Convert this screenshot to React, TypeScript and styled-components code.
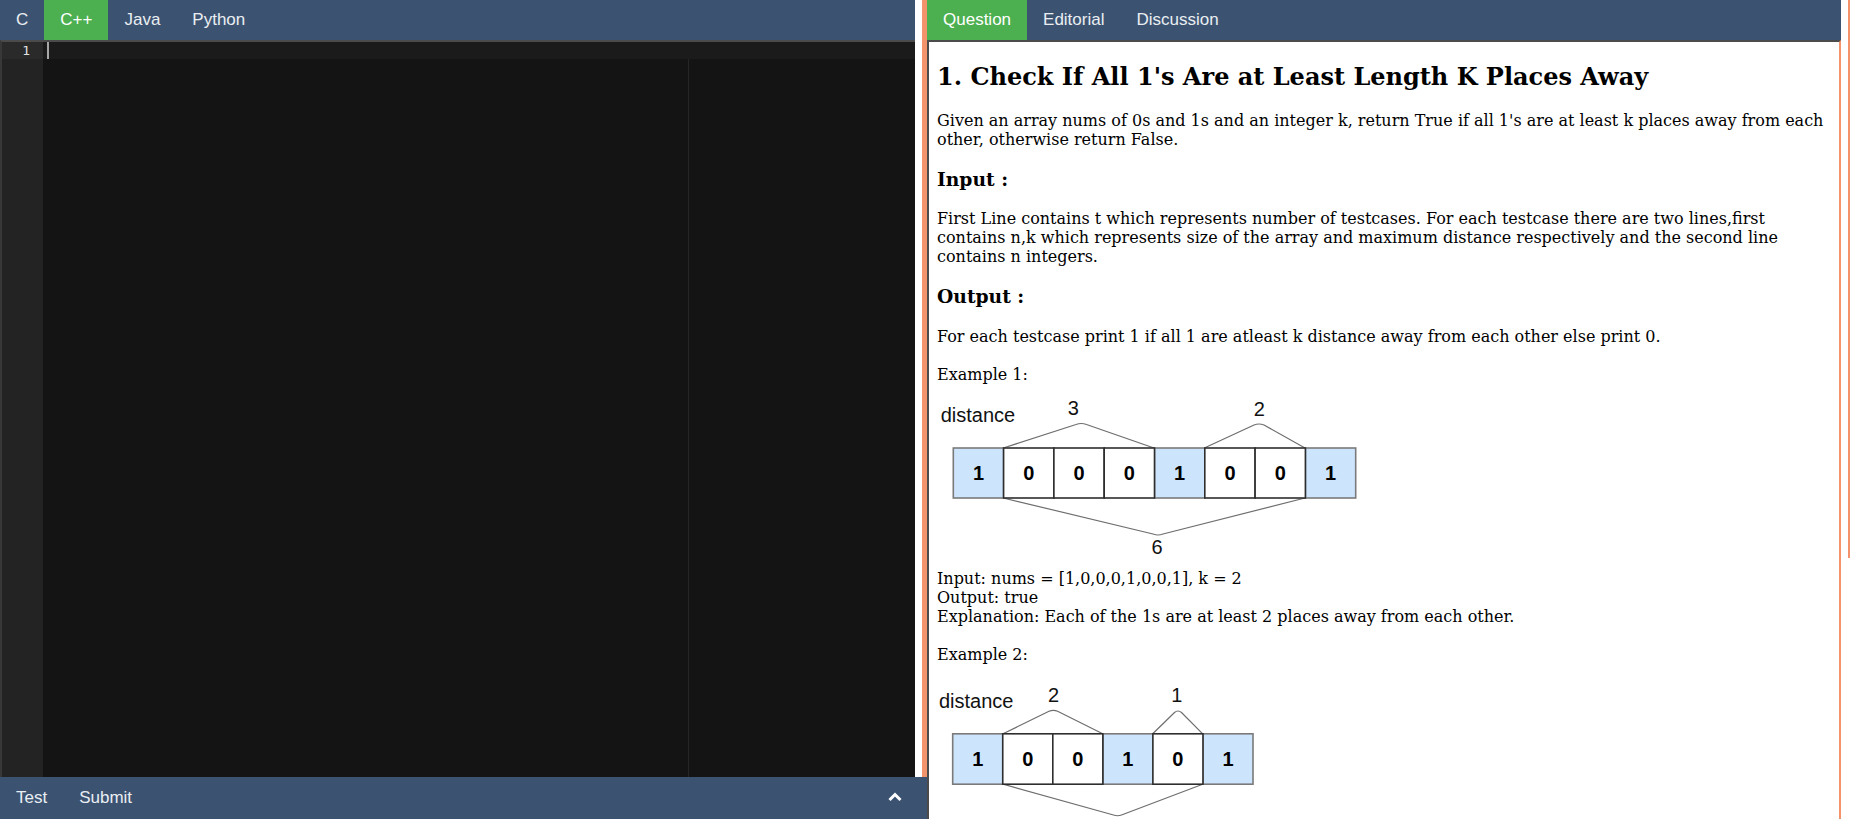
import React from "react";
import styled, { createGlobalStyle } from "styled-components";

const BLUE = "#3b5371";
const GREEN = "#4caf50";
const ORANGE = "#f3936b";

const GlobalStyle = createGlobalStyle`
  html, body {
    margin: 0;
    padding: 0;
    height: 100%;
    overflow: hidden;
    background: #ffffff;
  }
  #root { height: 100%; }
  * { box-sizing: border-box; }
`;

const Page = styled.div`
  display: flex;
  width: 100vw;
  height: 100vh;
  overflow: hidden;
`;

const LeftColumn = styled.div`
  width: 927px;
  flex: none;
  display: flex;
  flex-direction: column;
`;

const Workspace = styled.div`
  flex: 1;
  display: flex;
  min-height: 0;
`;

const EditorPane = styled.div`
  flex: 1;
  min-width: 0;
  display: flex;
  flex-direction: column;
`;

const TabBar = styled.div`
  height: 40px;
  flex: none;
  display: flex;
  background: ${BLUE};
`;

const Tab = styled.button<{ $active?: boolean }>`
  border: none;
  margin: 0;
  padding: 0 16px;
  height: 40px;
  line-height: 40px;
  font-family: "Liberation Sans", Arial, sans-serif;
  font-size: 17px;
  color: ${(p) => (p.$active ? "#ffffff" : "#eaeef2")};
  background: ${(p) => (p.$active ? GREEN : "transparent")};
  cursor: pointer;
`;

const Editor = styled.div`
  flex: 1;
  display: flex;
  min-height: 0;
  background: #141414;
  border-top: 2px solid #4b4b4b;
  border-left: 2px solid #383838;
`;

const Gutter = styled.div`
  width: 41px;
  flex: none;
  background: #232323;
`;

const GutterCell = styled.div<{ $active?: boolean }>`
  height: 17px;
  line-height: 17px;
  padding-right: 13px;
  text-align: right;
  font-family: "DejaVu Sans Mono", monospace;
  font-size: 13px;
  color: #e2e2e2;
  background: ${(p) => (p.$active ? "#2a2a2a" : "transparent")};
`;

const CodeArea = styled.div`
  flex: 1;
  position: relative;
  min-width: 0;
`;

const CodeLine = styled.div<{ $active?: boolean }>`
  position: relative;
  height: 17px;
  background: ${(p) => (p.$active ? "#1b1b1b" : "transparent")};
`;

const Cursor = styled.span`
  position: absolute;
  left: 4px;
  top: 0;
  width: 2px;
  height: 17px;
  background: #a7a7a7;
`;

const PrintMargin = styled.div`
  position: absolute;
  top: 0;
  bottom: 0;
  left: 645px;
  width: 1px;
  background: #262626;
`;

const Splitter = styled.div`
  width: 12px;
  flex: none;
  background: #ffffff;
  border-right: 5px solid ${ORANGE};
`;

const BottomBar = styled.div`
  height: 42px;
  flex: none;
  display: flex;
  align-items: center;
  background: ${BLUE};
`;

const BarButton = styled.button`
  border: none;
  background: transparent;
  margin: 0;
  padding: 0 16px;
  height: 42px;
  font-family: "Liberation Sans", Arial, sans-serif;
  font-size: 17px;
  color: #eaeef2;
  cursor: pointer;
`;

const ToggleButton = styled.button`
  margin: 0 0 0 auto;
  border: none;
  background: transparent;
  padding: 0 25px 3px 0;
  height: 42px;
  display: flex;
  align-items: center;
  cursor: pointer;
`;

const RightColumn = styled.div`
  flex: 1;
  min-width: 0;
  display: flex;
  flex-direction: column;
`;

const Content = styled.div`
  flex: 1;
  min-height: 0;
  overflow: hidden;
  background: #ffffff;
  border-top: 2px solid #4b4b4b;
  border-left: 2px solid #4b4b4b;
  border-right: 2px solid ${ORANGE};
  padding: 0 8px;
  font-family: "DejaVu Serif", serif;
  color: #000;
`;

const Title = styled.h2`
  font-size: 24px;
  line-height: 28px;
  font-weight: bold;
  margin: 20.5px 0 20px;
`;

const SubTitle = styled.h3`
  font-size: 18.72px;
  line-height: 22px;
  font-weight: bold;
  margin: 19.3px 0;
`;

const Para = styled.p`
  font-size: 16px;
  line-height: 19px;
  margin: 19.3px 0;
`;

const Figure = styled.div`
  margin: -11px 0;
  line-height: 0;
`;

const Diagram = styled.svg`
  display: block;
  overflow: visible;
`;

const ScrollRail = styled.div`
  width: 9px;
  flex: none;
  background: #ffffff;
  display: flex;
  justify-content: flex-end;
  align-items: flex-start;
`;

const ScrollThumb = styled.div`
  width: 2px;
  height: 558px;
  background: ${ORANGE};
`;

const languages = ["C", "C++", "Java", "Python"];
const panels = ["Question", "Editorial", "Discussion"];

type Brace = { d: string };
type Label = { x: number; y: number; text: string };

interface DiagramSpec {
  width: number;
  height: number;
  cells: number[];
  cellX: number;
  cellY: number;
  cellW: number;
  cellH: number;
  distance: { x: number; y: number };
  braces: Brace[];
  labels: Label[];
}

const example1: DiagramSpec = {
  width: 430,
  height: 168,
  cells: [1, 0, 0, 0, 1, 0, 0, 1],
  cellX: 16.3,
  cellY: 56,
  cellW: 50.3,
  cellH: 50,
  distance: { x: 3.7, y: 30.2 },
  braces: [
    { d: "M 66.3 56 L 139 32.5 Q 144.3 30.5 149.5 32.5 L 217 56" },
    { d: "M 267.3 56 L 317 33 Q 322 31 327 33 L 368 56" },
    { d: "M 66.3 106 L 216 142 Q 221 144 226 142 L 368 106" },
  ],
  labels: [
    { x: 136.3, y: 23.2, text: "3" },
    { x: 322.3, y: 24.2, text: "2" },
    { x: 220, y: 161.9, text: "6" },
  ],
};

const example2: DiagramSpec = {
  width: 430,
  height: 160,
  cells: [1, 0, 0, 1, 0, 1],
  cellX: 15.7,
  cellY: 61.8,
  cellW: 50.05,
  cellH: 50.4,
  distance: { x: 2, y: 35.7 },
  braces: [
    { d: "M 66 61.8 L 112 39.3 Q 116.3 37.3 120.6 39.3 L 165.7 61.8" },
    { d: "M 215.7 61.8 L 237.5 40.5 Q 241 37.5 244.5 40.5 L 265.7 61.8" },
    { d: "M 66 112.2 L 176.5 143 Q 180.5 144.5 184.5 143 L 265.7 112.2" },
  ],
  labels: [
    { x: 116.5, y: 29.7, text: "2" },
    { x: 239.7, y: 29.7, text: "1" },
  ],
};

const ArrayDiagram: React.FC<{ spec: DiagramSpec }> = ({ spec }) => {
  const order = spec.cells
    .map((v, i) => ({ v, i }))
    .sort((a, b) => b.v - a.v);
  return (
    <Diagram width={spec.width} height={spec.height} viewBox={`0 0 ${spec.width} ${spec.height}`}>
      <text
        x={spec.distance.x}
        y={spec.distance.y}
        fontFamily="Liberation Sans, Arial, sans-serif"
        fontSize="20"
        fill="#111"
      >
        distance
      </text>
      {spec.braces.map((b, i) => (
        <path key={i} d={b.d} fill="none" stroke="#6e6e6e" strokeWidth="1.2" />
      ))}
      {order.map(({ v, i }) => (
        <rect
          key={i}
          x={spec.cellX + i * spec.cellW}
          y={spec.cellY}
          width={spec.cellW}
          height={spec.cellH}
          fill={v === 1 ? "#cce4fc" : "#ffffff"}
          stroke={v === 1 ? "#7a7a7a" : "#2e2e2e"}
          strokeWidth="1.6"
        />
      ))}
      {spec.cells.map((v, i) => (
        <text
          key={`t${i}`}
          x={spec.cellX + i * spec.cellW + spec.cellW / 2}
          y={spec.cellY + spec.cellH / 2 + 7.2}
          textAnchor="middle"
          fontFamily="Liberation Sans, Arial, sans-serif"
          fontWeight="bold"
          fontSize="20"
          fill="#000"
        >
          {v}
        </text>
      ))}
      {spec.labels.map((l, i) => (
        <text
          key={`l${i}`}
          x={l.x}
          y={l.y}
          textAnchor="middle"
          fontFamily="Liberation Sans, Arial, sans-serif"
          fontSize="20"
          fill="#111"
        >
          {l.text}
        </text>
      ))}
    </Diagram>
  );
};

const ChevronUp = () => (
  <svg width="14" height="10" viewBox="0 0 14 10">
    <polyline
      points="1.5,8 7,2.5 12.5,8"
      fill="none"
      stroke="#ffffff"
      strokeWidth="3"
      strokeLinecap="butt"
      strokeLinejoin="miter"
    />
  </svg>
);

export default function App() {
  return (
    <>
      <GlobalStyle />
      <Page>
        <LeftColumn>
          <Workspace>
            <EditorPane>
              <TabBar>
                {languages.map((l) => (
                  <Tab key={l} $active={l === "C++"}>
                    {l}
                  </Tab>
                ))}
              </TabBar>
              <Editor>
                <Gutter>
                  <GutterCell $active>1</GutterCell>
                </Gutter>
                <CodeArea>
                  <PrintMargin />
                  <CodeLine $active>
                    <Cursor />
                  </CodeLine>
                </CodeArea>
              </Editor>
            </EditorPane>
            <Splitter />
          </Workspace>
          <BottomBar>
            <BarButton>Test</BarButton>
            <BarButton>Submit</BarButton>
            <ToggleButton aria-label="Expand console">
              <ChevronUp />
            </ToggleButton>
          </BottomBar>
        </LeftColumn>
        <RightColumn>
          <TabBar>
            {panels.map((p) => (
              <Tab key={p} $active={p === "Question"}>
                {p}
              </Tab>
            ))}
          </TabBar>
          <Content>
            <Title>1. Check If All 1's Are at Least Length K Places Away</Title>
            <Para>
              Given an array nums of 0s and 1s and an integer k, return True if all 1's are at least k
              places away from each other, otherwise return False.
            </Para>
            <SubTitle>Input :</SubTitle>
            <Para>
              First Line contains t which represents number of testcases. For each testcase there are two
              lines,first contains n,k which represents size of the array and maximum distance respectively
              and the second line contains n integers.
            </Para>
            <SubTitle>Output :</SubTitle>
            <Para>
              For each testcase print 1 if all 1 are atleast k distance away from each other else print 0.
            </Para>
            <Para>Example 1:</Para>
            <Figure>
              <ArrayDiagram spec={example1} />
            </Figure>
            <Para>
              Input: nums = [1,0,0,0,1,0,0,1], k = 2
              <br />
              Output: true
              <br />
              Explanation: Each of the 1s are at least 2 places away from each other.
            </Para>
            <Para>Example 2:</Para>
            <Figure>
              <ArrayDiagram spec={example2} />
            </Figure>
          </Content>
        </RightColumn>
        <ScrollRail>
          <ScrollThumb />
        </ScrollRail>
      </Page>
    </>
  );
}
